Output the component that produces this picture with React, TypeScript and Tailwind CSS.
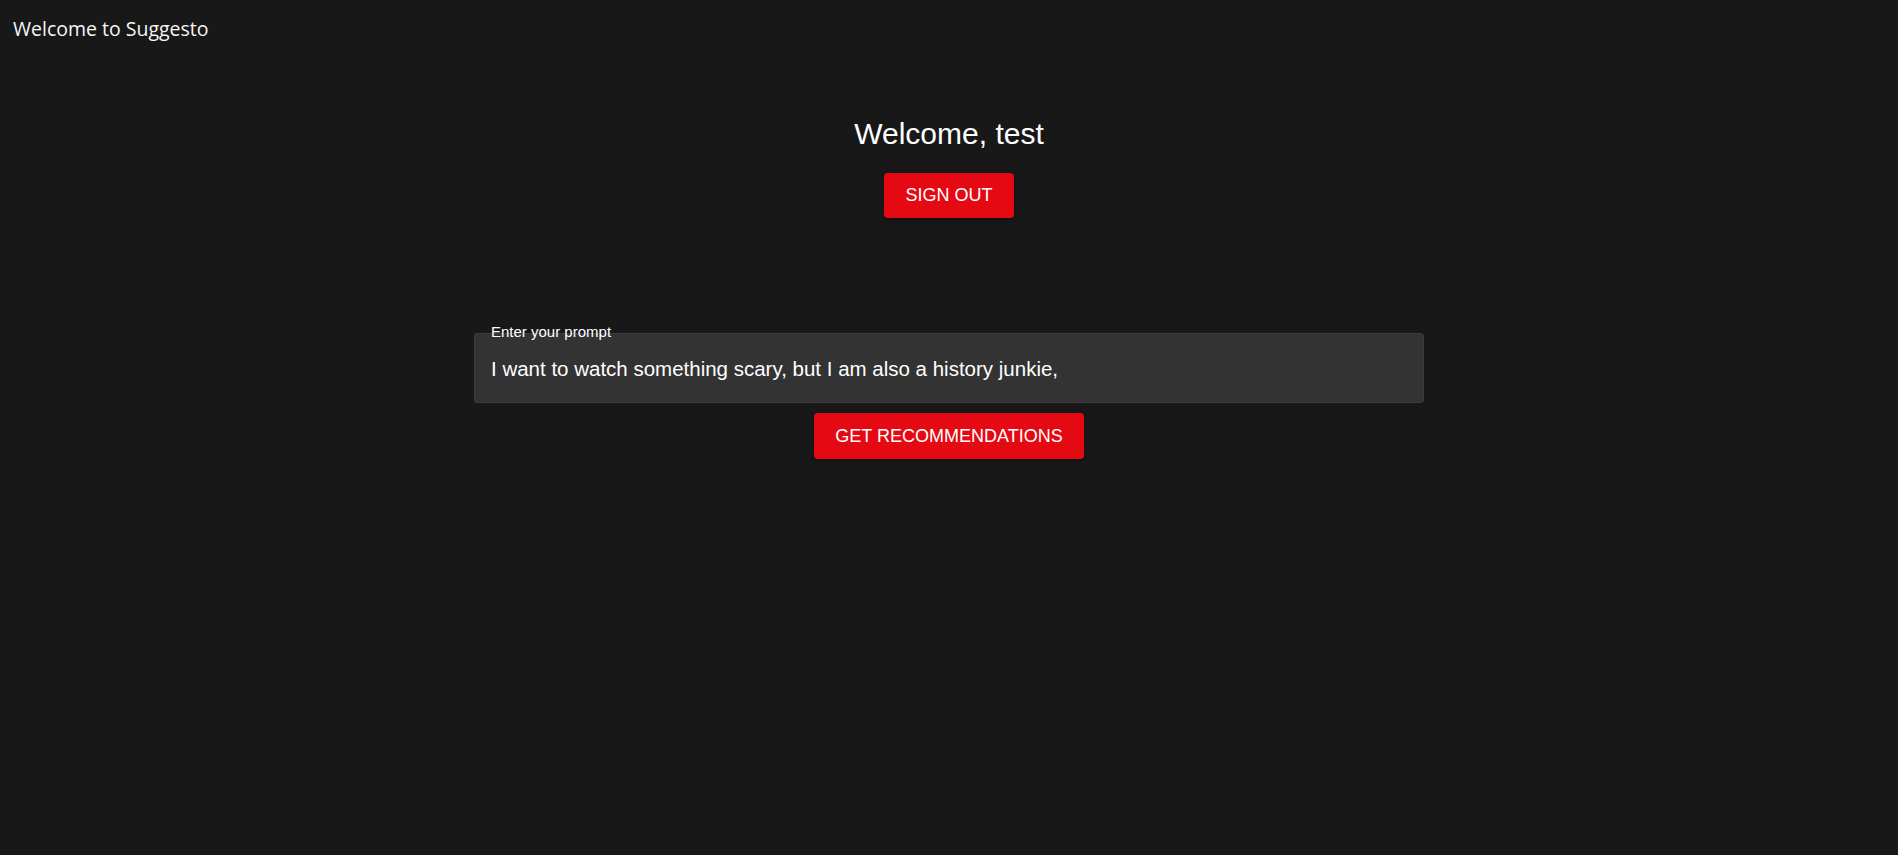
export default function App() {
  return (
    <div className="min-h-[855px] w-full bg-[#181818] text-white">
      {/* Top bar */}
      <div className="px-[13px] pt-[15px] text-[19.5px] leading-[28px] font-['Open_Sans',sans-serif] text-[#f5f5f5]">
        Welcome to Suggesto
      </div>

      <div className="flex flex-col items-center font-['Liberation_Sans',Arial,sans-serif]">
        <h1 className="mt-[75px] text-[30px] leading-[32px] font-normal">Welcome, test</h1>
        <button className="mt-[23px] h-[45px] px-[21px] rounded-[4px] bg-[#e50914] text-[18px] uppercase text-white shadow-[0_3px_1px_-2px_rgba(0,0,0,0.2),0_2px_2px_0_rgba(0,0,0,0.14),0_1px_5px_0_rgba(0,0,0,0.12)]">
          Sign out
        </button>

        {/* Prompt field */}
        <div className="relative mt-[115px] w-[950px]">
          <label className="absolute left-[17px] top-[-9px] text-[15px] leading-[16px] text-white">
            Enter your prompt
          </label>
          <div className="h-[70px] rounded-[3px] border border-[#3d3d3d] bg-[#333333] flex items-center px-[16px] pt-[2px]">
            <span className="text-[20.5px] leading-[24px] text-white">
              I want to watch something scary, but I am also a history junkie,
            </span>
          </div>
        </div>

        <button className="mt-[10px] h-[46px] px-[21px] rounded-[4px] bg-[#e50914] text-[18px] uppercase text-white shadow-[0_3px_1px_-2px_rgba(0,0,0,0.2),0_2px_2px_0_rgba(0,0,0,0.14),0_1px_5px_0_rgba(0,0,0,0.12)]">
          Get recommendations
        </button>
      </div>
    </div>
  );
}
